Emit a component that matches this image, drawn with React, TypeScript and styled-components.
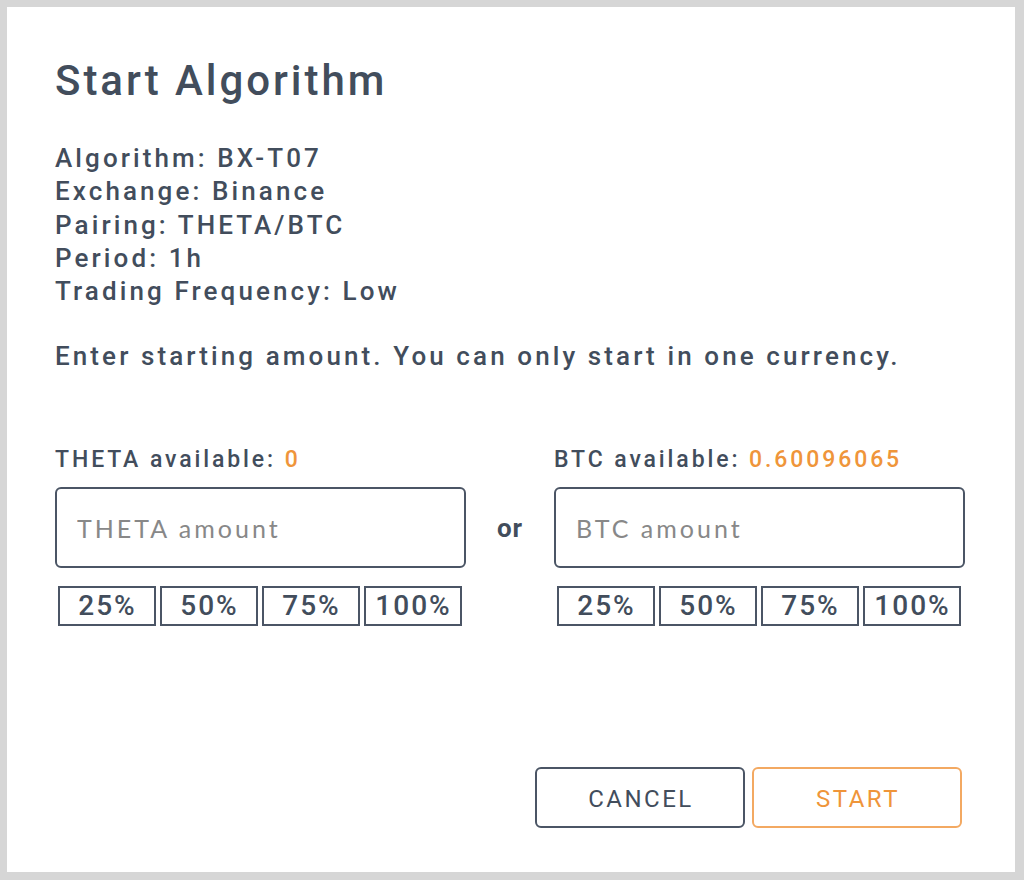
import React from "react";
import styled, { createGlobalStyle } from "styled-components";

const GlobalStyle = createGlobalStyle`
  html, body {
    margin: 0;
    padding: 0;
    background: #d6d6d6;
  }
  * { box-sizing: border-box; }
`;

const ink = "#424d5c";
const accent = "#ef953a";

const Frame = styled.div`
  width: 1024px;
  height: 880px;
  padding: 7px 9px 8px 7px;
  background: #d6d6d6;
`;

const Dialog = styled.div`
  height: 100%;
  background: #ffffff;
  display: flex;
  flex-direction: column;
  padding: 49px 50px 44px 48px;
  font-family: Roboto, "Liberation Sans", sans-serif;
  color: ${ink};
`;

const Title = styled.h1`
  margin: 0;
  font-size: 42px;
  line-height: 50px;
  font-weight: 500;
  letter-spacing: 2.95px;
`;

const InfoList = styled.div`
  margin-top: 36px;
  display: flex;
  flex-direction: column;
`;

const InfoLine = styled.div`
  font-size: 26px;
  line-height: 33.3px;
  font-weight: 500;
  letter-spacing: 3.1px;
`;

const Prompt = styled.p`
  margin: 31.5px 0 0;
  font-size: 26px;
  line-height: 33.3px;
  font-weight: 500;
  letter-spacing: 3.1px;
`;

const AmountRow = styled.div`
  margin-top: 73px;
  display: grid;
  grid-template-columns: 411px 1fr 411px;
  align-items: start;
`;

const Column = styled.div`
  display: flex;
  flex-direction: column;
`;

const Label = styled.div`
  font-size: 23px;
  line-height: 28px;
  font-weight: 500;
  letter-spacing: 2.9px;
`;

const Available = styled.span`
  color: ${accent};
`;

const AmountInput = styled.input`
  margin-top: 13px;
  width: 100%;
  height: 81px;
  border: 2px solid #4b5565;
  border-radius: 6px;
  padding: 0 20px;
  font-family: Lato, "Open Sans", sans-serif;
  font-size: 25px;
  letter-spacing: 3px;
  color: ${ink};
  outline: none;
  background: #fff;

  &::placeholder {
    color: #888888;
  }
`;

const Or = styled.div`
  margin-top: 41px;
  height: 81px;
  display: flex;
  align-items: center;
  justify-content: center;
  font-size: 26px;
  font-weight: 700;
  letter-spacing: 1px;
`;

const PercentRow = styled.div`
  margin-top: 18px;
  padding-left: 2.5px;
  display: flex;
  gap: 4px;
`;

const PercentButton = styled.button`
  width: 98px;
  height: 40px;
  padding: 0 0 0 2px;
  border: 2px solid #4b5565;
  border-radius: 0;
  background: #fff;
  font-family: Roboto, "Liberation Sans", sans-serif;
  font-size: 28px;
  line-height: 1;
  font-weight: 500;
  letter-spacing: 2px;
  color: ${ink};
  cursor: pointer;
`;

const Footer = styled.div`
  margin-top: auto;
  padding-right: 3px;
  display: flex;
  justify-content: flex-end;
  gap: 7px;
`;

const ActionButton = styled.button<{ $primary?: boolean }>`
  width: 210px;
  height: 61px;
  border-radius: 6px;
  background: #fff;
  border: ${(p) => (p.$primary ? `2px solid #f3a962` : `2px solid #4b5565`)};
  color: ${(p) => (p.$primary ? accent : ink)};
  font-family: Roboto, "Liberation Sans", sans-serif;
  font-size: 24px;
  font-weight: 400;
  letter-spacing: 2.5px;
  padding: 3px 0 0 2px;
  cursor: pointer;
`;

const details = [
  "Algorithm: BX-T07",
  "Exchange: Binance",
  "Pairing: THETA/BTC",
  "Period: 1h",
  "Trading Frequency: Low",
];

const percents = ["25%", "50%", "75%", "100%"];

function AmountColumn({ coin, available }: { coin: string; available: string }) {
  return (
    <Column>
      <Label>
        {coin} available: <Available>{available}</Available>
      </Label>
      <AmountInput placeholder={`${coin} amount`} />
      <PercentRow>
        {percents.map((p) => (
          <PercentButton key={p}>{p}</PercentButton>
        ))}
      </PercentRow>
    </Column>
  );
}

export default function App() {
  return (
    <>
      <GlobalStyle />
      <Frame>
        <Dialog>
          <Title>Start Algorithm</Title>
          <InfoList>
            {details.map((d) => (
              <InfoLine key={d}>{d}</InfoLine>
            ))}
          </InfoList>
          <Prompt>Enter starting amount. You can only start in one currency.</Prompt>
          <AmountRow>
            <AmountColumn coin="THETA" available="0" />
            <Or>or</Or>
            <AmountColumn coin="BTC" available="0.60096065" />
          </AmountRow>
          <Footer>
            <ActionButton>CANCEL</ActionButton>
            <ActionButton $primary>START</ActionButton>
          </Footer>
        </Dialog>
      </Frame>
    </>
  );
}
